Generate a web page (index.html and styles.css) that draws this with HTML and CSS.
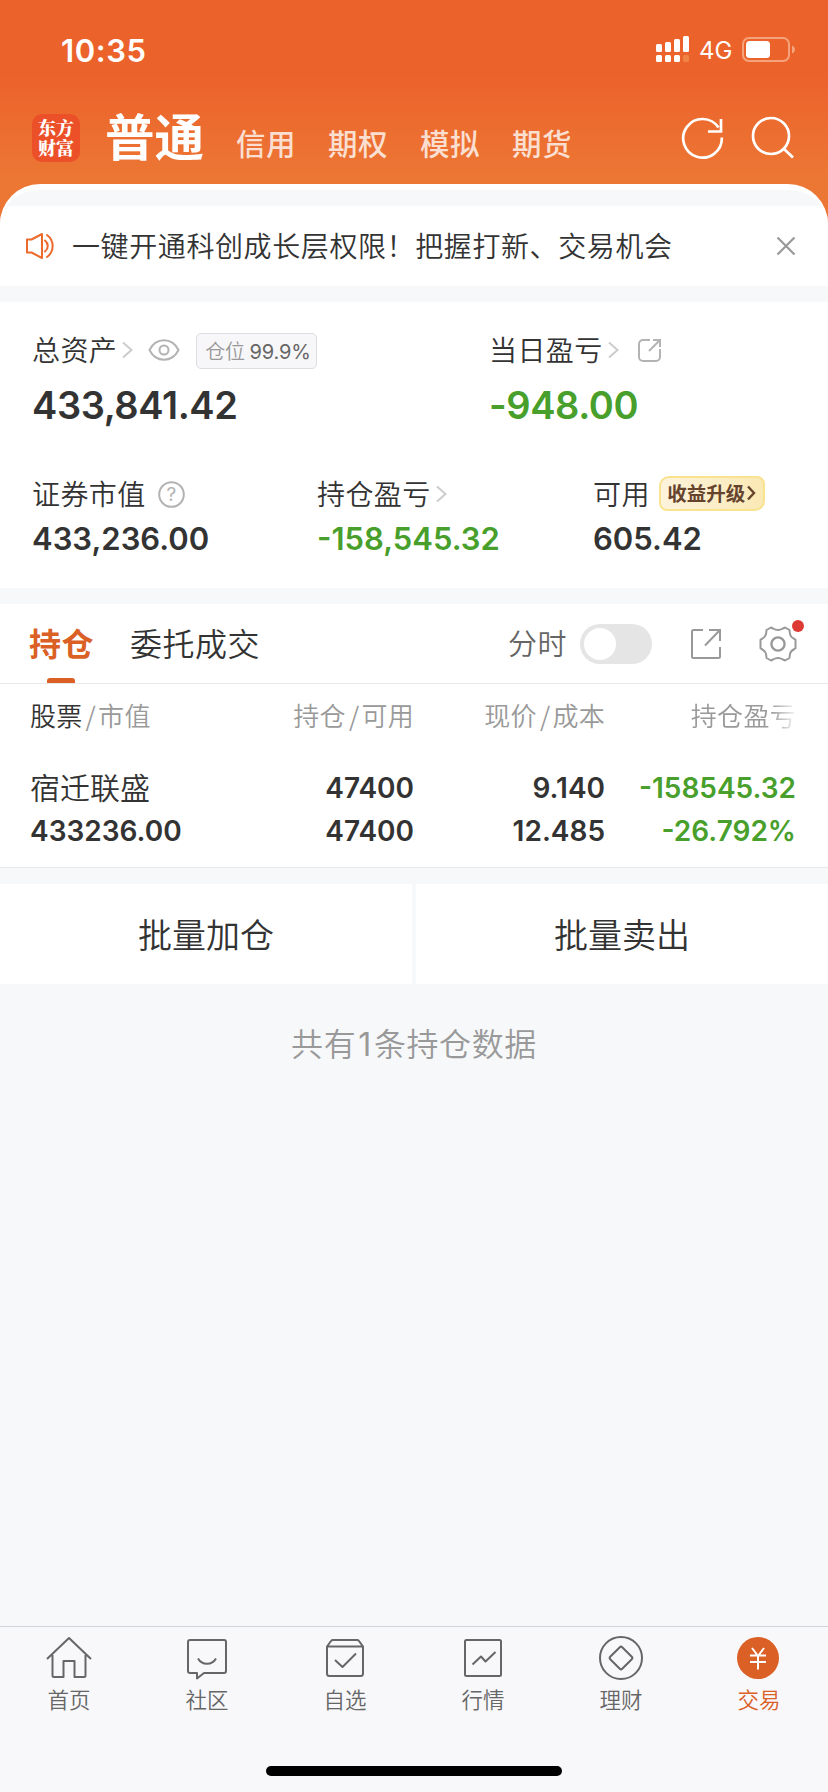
FILE: index.html
```html
<!DOCTYPE html>
<html lang="zh-CN">
<head>
    <meta charset="UTF-8">
    <meta name="viewport" content="width=device-width, initial-scale=1">
    <title>交易</title>
    <link rel="stylesheet" href="styles.css">
</head>
<body>
    <header class="top">
        <div class="status">
            <span class="time">10:35</span>
            <svg class="signal" width="34" height="28" viewBox="0 0 34 28" fill="#fff">
                <rect x="0" y="8" width="6" height="8" rx="1.5"/>
                <rect x="9" y="6" width="6" height="10" rx="1.5"/>
                <rect x="18" y="3" width="6" height="13" rx="1.5"/>
                <rect x="27" y="0" width="6" height="16" rx="1.5"/>
                <rect x="0" y="19" width="6" height="7" rx="1.5"/>
                <rect x="9" y="19" width="6" height="7" rx="1.5"/>
                <rect x="18" y="19" width="6" height="7" rx="1.5"/>
                <rect x="27" y="19" width="6" height="7" rx="1.5" fill="#f08346"/>
            </svg>
            <span class="network">4G</span>
            <svg class="battery" width="54" height="26" viewBox="0 0 54 26">
                <rect x="1" y="1" width="46" height="23" rx="6" fill="none" stroke="#f5a37b" stroke-width="2"/>
                <rect x="4" y="4" width="24" height="17" rx="3.5" fill="#fff"/>
                <path d="M50 8.5c4 1.5 4 6.500 0 8z" fill="#f5a37b"/>
            </svg>
        </div>
        <nav class="accounts">
            <div class="logo">东方<br>财富</div>
            <a class="account current">普通</a>
            <a class="account">信用</a>
            <a class="account">期权</a>
            <a class="account">模拟</a>
            <a class="account">期货</a>
            <svg class="refresh" width="44" height="44" viewBox="0 0 44 44" fill="none" stroke="#fff" stroke-width="2.700">
                <path d="M40.800 21.500A19.300 19.300 0 1 1 37.500 11.500"/>
                <path d="M40 3V15.500H27"/>
            </svg>
            <svg class="search" width="44" height="44" viewBox="0 0 44 44" fill="none" stroke="#fff" stroke-width="2.700">
                <circle cx="20" cy="20" r="18"/>
                <path d="M32.500 32.500L42 41.500"/>
            </svg>
        </nav>
    </header>

    <main class="page">
        <div class="notice">
            <svg width="30" height="28" viewBox="0 0 30 28" fill="none" stroke="#ec6a2c" stroke-width="2" stroke-linejoin="round" stroke-linecap="round">
                <path d="M2 7.500h4.500L17 2v24L6.500 20.500H2z"/>
                <path d="M20 8.500c3.700 3 3.700 8 0 11"/>
                <path d="M22 3c7.500 5.500 7.500 16.500 0 22"/>
            </svg>
            <span class="notice-text">一键开通科创成长层权限！把握打新、交易机会</span>
            <svg class="close" width="20" height="20" viewBox="0 0 20 20" fill="none" stroke="#999" stroke-width="2.200">
                <path d="M1.500 1.500l17 17M18.500 1.500l-17 17"/>
            </svg>
        </div>

        <section class="assets">
            <div class="assets-main">
                <div>
                    <div class="label"><span>总资产</span>
                        <svg class="arrow" width="11" height="18" viewBox="0 0 11 18"><path d="M1 1.500l8.500 7.500L1 16.500"/></svg>
                        <svg class="eye" width="32" height="22" viewBox="0 0 32 22" fill="none" stroke="#b3b3b3" stroke-width="2">
                            <path d="M1.500 11C8-2 24-2 30.500 11 24 24 8 24 1.500 11z"/>
                            <circle cx="16" cy="11" r="4.500"/>
                        </svg>
                        <div class="ratio">仓位 <b>99.9%</b></div>
                    </div>
                    <div class="big num">433,841.42</div>
                </div>
                <div>
                    <div class="label"><span>当日盈亏</span>
                        <svg class="arrow" width="11" height="18" viewBox="0 0 11 18"><path d="M1 1.500l8.500 7.500L1 16.500"/></svg>
                        <svg class="share" width="24" height="24" viewBox="0 0 24 24" fill="none" stroke="#b3b3b3" stroke-width="2">
                            <path d="M13 2H6a4 4 0 0 0-4 4v13a4 4 0 0 0 4 4h13a4 4 0 0 0 4-4v-8"/>
                            <path d="M16 2h7v7M22.500 2.500L12 13"/>
                        </svg>
                    </div>
                    <div class="big num down">-948.00</div>
                </div>
            </div>
            <div class="assets-sub">
                <div>
                    <div class="label"><span>证券市值</span>
                        <svg class="help" width="27" height="27" viewBox="0 0 27 27">
                            <circle cx="13.500" cy="13.500" r="12.300" fill="none" stroke="#b3b3b3" stroke-width="2"/>
                            <text x="13.500" y="20" text-anchor="middle">?</text>
                        </svg>
                    </div>
                    <div class="mid num">433,236.00</div>
                </div>
                <div>
                    <div class="label"><span>持仓盈亏</span>
                        <svg class="arrow" width="11" height="18" viewBox="0 0 11 18"><path d="M1 1.500l8.500 7.500L1 16.500"/></svg>
                    </div>
                    <div class="mid num down">-158,545.32</div>
                </div>
                <div>
                    <div class="label"><span>可用</span>
                        <div class="upgrade">收益升级<svg width="9" height="16" viewBox="0 0 9 16" fill="none" stroke="#65432d" stroke-width="2.400"><path d="M1 1.500L7 8l-6 6.500"/></svg></div>
                    </div>
                    <div class="mid num">605.42</div>
                </div>
            </div>
        </section>

        <section class="holdings">
            <div class="tabs">
                <a class="tab active">持仓</a>
                <a class="tab">委托成交</a>
                <span class="minute">分时</span>
                <span class="switch"></span>
                <svg class="export" width="32" height="32" viewBox="0 0 32 32" fill="none" stroke="#999" stroke-width="2">
                    <path d="M13 2H3.500A1.500 1.500 0 0 0 2 3.500v25A1.500 1.500 0 0 0 3.500 30h25a1.500 1.500 0 0 0 1.500-1.500V19"/>
                    <path d="M19 2h11v11M29.500 2.500L15 17.500"/>
                </svg>
                <span class="gear">
                    <svg width="38" height="38" viewBox="0 0 38 38" fill="none" stroke="#999" stroke-width="2" stroke-linejoin="round">
                        <path d="M12 2.500l2 1q5 3 10 0l2-1 4.500 2.500.3 3q.4 4 4.700 6l1 .7v8.600l-1 .7q-4.300 2-4.700 6l-.3 3-4.500 2.500-2-1q-5-3-10 0l-2 1-4.500-2.500-.3-3q-.4-4-4.700-6l-1-.7v-8.600l1-.7q4.300-2 4.700-6l.3-3z"/>
                        <circle cx="19" cy="19" r="6.600" stroke-width="2.400"/>
                    </svg>
                    <i class="dot"></i>
                </span>
            </div>
            <div class="row head">
                <span><em>股票</em><i>/</i>市值</span>
                <span>持仓<i>/</i>可用</span>
                <span>现价<i>/</i>成本</span>
                <span class="fade">持仓盈亏</span>
            </div>
            <div class="row stock">
                <span class="name">宿迁联盛</span>
                <span>47400</span>
                <span>9.140</span>
                <span class="down">-158545.32</span>
                <span>433236.00</span>
                <span>47400</span>
                <span>12.485</span>
                <span class="down">-26.792%</span>
            </div>
        </section>

        <div class="batch">
            <a>批量加仓</a>
            <a>批量卖出</a>
        </div>
        <p class="total">共有<span>1</span>条持仓数据</p>
    </main>

    <footer class="tabbar">
        <a>
            <svg width="46" height="46" viewBox="0 0 46 46">
                <path d="M1 24L23 3l22 21M6.500 20v20.500a1.500 1.500 0 0 0 1.500 1.500h9.500V26h11v16H38a1.500 1.500 0 0 0 1.500-1.500V20"/>
            </svg>
            首页
        </a>
        <a>
            <svg width="46" height="46" viewBox="0 0 46 46">
                <path d="M6 5h34a2 2 0 0 1 2 2v29a2 2 0 0 1-2 2H20l-7 5.500V38H6a2 2 0 0 1-2-2V7a2 2 0 0 1 2-2z"/>
                <path d="M14 23.500c4 7 14 7 18 0"/>
            </svg>
            社区
        </a>
        <a>
            <svg width="46" height="46" viewBox="0 0 46 46">
                <path d="M5 11.500h36v27a2.500 2.500 0 0 1-2.500 2.500h-31A2.500 2.500 0 0 1 5 38.500zM5 11.500L9 6q.7-1 2-1h24q1.300 0 2 1l4 5.500"/>
                <path d="M13 25l7.500 7L34 18.500"/>
            </svg>
            自选
        </a>
        <a>
            <svg width="46" height="46" viewBox="0 0 46 46">
                <rect x="5" y="5" width="36" height="36" rx="1.500"/>
                <path d="M12.500 29.500l8.500-8 4.500 5 10-9.500"/>
            </svg>
            行情
        </a>
        <a>
            <svg width="46" height="46" viewBox="0 0 46 46">
                <circle cx="23" cy="23" r="21"/>
                <path d="M21.800 12.200a1.700 1.700 0 0 1 2.400 0l9.600 9.600a1.700 1.700 0 0 1 0 2.400l-9.600 9.600a1.700 1.700 0 0 1-2.400 0l-9.600-9.600a1.700 1.700 0 0 1 0-2.400z"/>
            </svg>
            理财
        </a>
        <a class="on">
            <svg width="46" height="46" viewBox="0 0 46 46">
                <circle class="coin" cx="22" cy="23" r="21"/>
                <path class="yen" d="M16 13l6 8 6-8M22 21v13.500M14 20.500h16M14 27h16"/>
            </svg>
            交易
        </a>
        <div class="home-bar"></div>
    </footer>
</body>
</html>
```
FILE: styles.css
```css
* {
    box-sizing: border-box;
}
html, body {
    height: 100%;
    margin: 0;
}
body {
    width: 828px;
    min-height: 1792px;
    display: flex;
    flex-direction: column;
    overflow: hidden;
    background: #f7f8fa;
    color: #333;
    font-family: "Noto Sans CJK SC", sans-serif;
    font-size: 28px;
    font-weight: 350;
    -webkit-font-smoothing: antialiased;
}
svg {
    display: block;
    flex: none;
}
i, em {
    font-style: normal;
}
.num {
    font-family: Inter, "Noto Sans CJK SC", sans-serif;
    font-weight: 600;
}
.down {
    color: #489f2b;
}

/* header */
.top {
    height: 240px;
    flex: none;
    background: linear-gradient(#ec622b 0, #ec622b 75px, #ec7634 175px, #ec7735 100%);
}
.status {
    height: 100px;
    padding-left: 61px;
    display: flex;
    align-items: center;
    color: #fff;
    font-family: Inter, sans-serif;
    font-weight: 400;
}
.time {
    width: 594px;
    font-size: 31px;
    font-weight: 600;
    letter-spacing: 0.6px;
}
.signal {
    margin-left: 1px;
}
.network {
    width: 43px;
    margin-left: 9px;
    font-size: 24px;
}
.accounts {
    height: 76px;
    padding-left: 32px;
    display: flex;
    align-items: center;
    color: #fff;
}
.logo {
    width: 48px;
    height: 48px;
    padding-top: 4px;
    border-radius: 10px;
    background: #ec5029;
    text-align: center;
    font-family: "Noto Serif CJK SC", "Noto Sans CJK SC", serif;
    font-weight: 900;
    font-size: 18px;
    line-height: 19.5px;
}
.account {
    width: 92px;
    padding-top: 8px;
    font-size: 29.5px;
    line-height: 40px;
    font-weight: 500;
    letter-spacing: 0.6px;
    color: rgba(255, 255, 255, 0.78);
}
.account.current {
    width: 131px;
    margin-left: 25px;
    padding: 0 0 6px;
    font-size: 49.5px;
    line-height: 60px;
    font-weight: 700;
    letter-spacing: 0;
    color: #fff;
}
.refresh {
    margin-left: 77px;
}
.search {
    margin-left: 26px;
}

/* rounded page over the header */
.page {
    flex: 1;
    margin-top: -56px;
    border-radius: 40px 40px 0 0;
    overflow: hidden;
    background: #f7f8fa;
    border-top: 6px solid #fff;
}
.notice {
    height: 80px;
    margin-top: 16px;
    padding: 0 32px 0 25px;
    display: flex;
    align-items: center;
    background: #fff;
}
.notice-text {
    flex: 1;
    margin-left: 17px;
    padding-bottom: 2px;
    letter-spacing: 0.6px;
}

/* assets */
.assets {
    height: 286px;
    margin-top: 16px;
    padding: 30px 0 0 32px;
    background: #fff;
}
.assets-main {
    display: grid;
    grid-template-columns: 457px 1fr;
}
.assets-sub {
    margin-top: 49px;
    display: grid;
    grid-template-columns: 285px 276px 1fr;
}
.label {
    height: 36px;
    display: flex;
    align-items: center;
    letter-spacing: 0.4px;
}
.label > span {
    padding-bottom: 3px;
}
.arrow {
    margin-left: 5px;
    fill: none;
    stroke: #ccc;
    stroke-width: 2;
}
.eye {
    margin-left: 15px;
}
.ratio {
    height: 36px;
    margin: 2px 0 0 16px;
    padding: 0 5px 0 8px;
    border: 1px solid #dedee2;
    border-radius: 5px;
    background: #f7f7fa;
    color: #999;
    font-size: 20px;
    line-height: 34px;
    letter-spacing: -0.1px;
    white-space: nowrap;
}
.ratio b {
    font-family: Inter, sans-serif;
    font-weight: 400;
    color: #666;
}
.share {
    margin-left: 18px;
}
.help {
    margin-left: 12px;
}
.help text {
    font: 19px Inter, sans-serif;
    fill: #b3b3b3;
}
.upgrade {
    width: 106px;
    height: 35px;
    margin: -2px 0 0 9px;
    padding-bottom: 1px;
    display: flex;
    align-items: center;
    justify-content: center;
    gap: 2px;
    border: 2px solid #f9e38f;
    border-radius: 10px 8px 10px 8px;
    background: linear-gradient(90deg, #fdf3dc, #fae9b5);
    color: #65432d;
    font-size: 19.5px;
    font-weight: 700;
    letter-spacing: 0;
}
.big {
    margin-top: 15px;
    font-size: 38px;
    line-height: 45px;
    letter-spacing: -0.4px;
}
.assets-main + .assets-sub {
    margin-top: 48px;
}
.mid {
    margin-top: 9px;
    font-size: 31px;
    line-height: 36px;
}

/* holdings */
.holdings {
    margin-top: 16px;
    background: #fff;
    border-bottom: 1px solid #e8e9eb;
}
.tabs {
    height: 80px;
    padding-left: 29px;
    display: flex;
    align-items: center;
    border-bottom: 1px solid #e8e9eb;
}
.tab {
    height: 79px;
    margin-right: 36px;
    font-size: 32px;
    line-height: 76px;
    letter-spacing: 0.5px;
}
.tab.active {
    position: relative;
    color: #da6026;
    font-weight: 700;
}
.tab.active::after {
    content: "";
    position: absolute;
    left: 18px;
    bottom: 0;
    width: 28px;
    height: 5px;
    border-radius: 3px 3px 0 0;
    background: #da6026;
}
.minute {
    margin-left: auto;
    padding-bottom: 3px;
    font-size: 29px;
    letter-spacing: 0.5px;
    color: #666;
}
.switch {
    width: 72px;
    height: 40px;
    margin-left: 13px;
    padding: 4px;
    border-radius: 20px;
    background: #e5e5e5;
}
.switch::before {
    content: "";
    display: block;
    width: 32px;
    height: 32px;
    border-radius: 50%;
    background: #fff;
}
.export {
    margin-left: 38px;
}
.gear {
    position: relative;
    margin: 0 31px 0 37px;
}
.dot {
    position: absolute;
    top: -5px;
    right: -7px;
    width: 12px;
    height: 12px;
    border-radius: 50%;
    background: #de3a34;
}
.row {
    padding-left: 30px;
    display: grid;
    grid-template-columns: 193px 191px 191px 191px;
    text-align: right;
}
.row > :nth-child(4n + 1) {
    text-align: left;
}
.head {
    height: 64px;
    font-size: 26px;
    line-height: 62px;
    letter-spacing: 0.3px;
    color: #999;
}
.head em {
    color: #333;
}
.head i {
    margin: 0 2px 0 3px;
}
.fade {
    -webkit-mask-image: linear-gradient(90deg, #000 165px, transparent 194px);
    mask-image: linear-gradient(90deg, #000 165px, transparent 194px);
}
.stock {
    padding-top: 19px;
    padding-bottom: 14px;
    font-family: Inter, "Noto Sans CJK SC", sans-serif;
    font-size: 28px;
    font-weight: 600;
    line-height: 43px;
}
.stock .name {
    font-family: "Noto Sans CJK SC", sans-serif;
    font-size: 30px;
    font-weight: 350;
    line-height: 39px;
}

.batch {
    height: 100px;
    margin-top: 16px;
    display: grid;
    grid-template-columns: 1fr 1fr;
    gap: 4px;
}
.batch a {
    background: #fff;
    text-align: center;
    font-size: 34px;
    line-height: 99px;
}
.total {
    margin: 38px 0 0;
    text-align: center;
    color: #999;
    font-size: 32px;
    line-height: 40px;
    letter-spacing: 0.6px;
}
.total span {
    margin: 0 2px;
    font-family: Inter, sans-serif;
    font-weight: 400;
}

/* bottom bar */
.tabbar {
    height: 166px;
    flex: none;
    padding-top: 8px;
    display: grid;
    grid-template-columns: repeat(6, 1fr);
    grid-template-rows: 131px auto;
    border-top: 1px solid #d3d3dc;
    background: #f8f8fb;
}
.tabbar a {
    display: flex;
    flex-direction: column;
    align-items: center;
    gap: 2px;
    font-size: 21.5px;
    line-height: 32px;
    color: #666;
}
.tabbar svg {
    fill: none;
    stroke: #666;
    stroke-width: 2;
    stroke-linejoin: round;
}
.tabbar .on {
    color: #da6026;
}
.tabbar .coin {
    fill: #da6026;
    stroke: none;
}
.tabbar .yen {
    stroke: #fff;
}
.home-bar {
    grid-column: 1 / -1;
    width: 296px;
    height: 10px;
    margin: 0 auto;
    border-radius: 5px;
    background: #000;
}
```
